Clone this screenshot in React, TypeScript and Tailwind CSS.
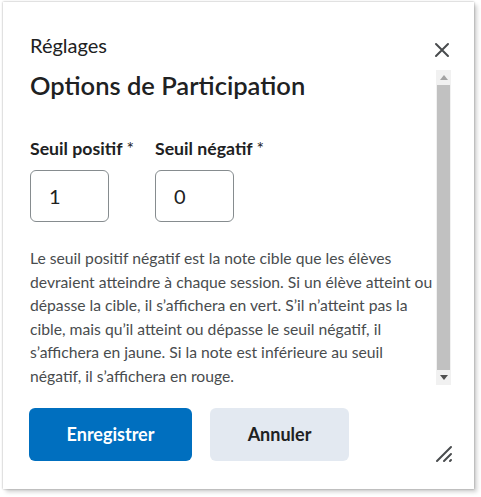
import React from "react";

function CloseIcon() {
  return (
    <svg width="16" height="16" viewBox="0 0 16 16" fill="none">
      <path d="M2 2L14 14M14 2L2 14" stroke="#494c4e" strokeWidth="2" strokeLinecap="round" />
    </svg>
  );
}

function ResizeHandle() {
  return (
    <svg width="18" height="18" viewBox="0 0 18 18" fill="none">
      <path d="M2 16L16 2M9 16L16 9M15 16L16 15" stroke="#494c4e" strokeWidth="2" strokeLinecap="round" />
    </svg>
  );
}

function FakeScrollbar() {
  return (
    <div className="flex h-[315px] w-[15px] shrink-0 flex-col bg-[#f1f1f1]">
      {/* arrow up */}
      <div className="flex h-[15px] items-center justify-center">
        <svg width="8" height="5" viewBox="0 0 8 5">
          <path d="M0 5L4 0L8 5Z" fill="#a3a3a3" />
        </svg>
      </div>
      <div className="mx-[1px] flex-1 bg-[#c1c1c1]" />
      {/* arrow down */}
      <div className="flex h-[15px] items-center justify-center">
        <svg width="8" height="5" viewBox="0 0 8 5">
          <path d="M0 0L8 0L4 5Z" fill="#505050" />
        </svg>
      </div>
    </div>
  );
}

function ThresholdField({ label, value }: { label: string; value: string }) {
  return (
    <div className="flex flex-col">
      <label className="text-[17.7px] leading-[22px] font-bold text-[#202122]">
        {label} <span className="font-normal">*</span>
      </label>
      <div className="mt-[10px] flex h-[52px] w-[79px] items-center rounded-[6px] border border-[#868c8f] pl-[18px] text-[20px] text-[#202122]">
        {value}
      </div>
    </div>
  );
}

export default function App() {
  return (
    <div className="h-[497px] w-[481px] bg-white" style={{ fontFamily: "Lato, 'Open Sans', sans-serif" }}>
      <div className="ml-[3px] mt-[2px] flex h-[487px] w-[471px] flex-col bg-white shadow-[0_0_2px_rgba(0,0,0,0.35),3px_3px_4px_rgba(0,0,0,0.18)]">
        {/* Header */}
        <div className="flex h-[68px] items-start justify-between pl-[27px] pr-[24px] pt-[31px]">
          <h2 className="text-[20px] leading-[24px] text-[#202122]">Réglages</h2>
          <button aria-label="Fermer" className="mt-[9px]">
            <CloseIcon />
          </button>
        </div>

        {/* Scrollable body */}
        <div className="flex h-[315px] pl-[27px] pr-[23px]">
          <div className="flex-1 pr-[1px]">
            <h1 className="text-[25.5px] leading-[30px] font-semibold text-[#202122]">
              Options de Participation
            </h1>
            <div className="mt-[38px] flex gap-[21px]">
              <ThresholdField label="Seuil positif" value="1" />
              <ThresholdField label="Seuil négatif" value="0" />
            </div>
            <p className="mt-[25px] text-[15.7px] leading-[23.5px] text-[#494c4e]">
              Le seuil positif négatif est la note cible que les élèves devraient atteindre à chaque session. Si un élève atteint ou dépasse la cible, il s’affichera en vert. S’il n’atteint pas la cible, mais qu’il atteint ou dépasse le seuil négatif, il s’affichera en jaune. Si la note est inférieure au seuil négatif, il s’affichera en rouge.
            </p>
          </div>
          <FakeScrollbar />
        </div>

        {/* Footer */}
        <div className="mt-[23px] flex items-end pl-[26px] pr-[21px]">
          <button className="h-[53px] w-[163px] rounded-[6px] bg-[#006fbf] text-[18px] font-bold text-white">
            Enregistrer
          </button>
          <button className="ml-[18px] h-[53px] w-[139px] rounded-[6px] bg-[#e3e9f1] text-[18px] font-bold text-[#202122]">
            Annuler
          </button>
          <div className="ml-auto mb-[-2px]">
            <ResizeHandle />
          </div>
        </div>
      </div>
    </div>
  );
}
